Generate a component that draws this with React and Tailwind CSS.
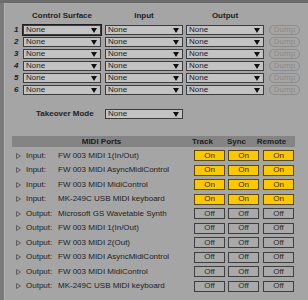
const ports = [
  { dir: "Input:", name: "FW 003 MIDI 1(In/Out)", on: true },
  { dir: "Input:", name: "FW 003 MIDI AsyncMidiControl", on: true },
  { dir: "Input:", name: "FW 003 MIDI MidiControl", on: true },
  { dir: "Input:", name: "MK-249C USB MIDI keyboard", on: true },
  { dir: "Output:", name: "Microsoft GS Wavetable Synth", on: false },
  { dir: "Output:", name: "FW 003 MIDI 1(In/Out)", on: false },
  { dir: "Output:", name: "FW 003 MIDI 2(Out)", on: false },
  { dir: "Output:", name: "FW 003 MIDI AsyncMidiControl", on: false },
  { dir: "Output:", name: "FW 003 MIDI MidiControl", on: false },
  { dir: "Output:", name: "MK-249C USB MIDI keyboard", on: false },
];

function Arrow() {
  return (
    <svg width="6" height="5" viewBox="0 0 6 5" className="shrink-0">
      <polygon points="0,0 6,0 3,5" fill="#111" />
    </svg>
  );
}

function Select({ active }) {
  return (
    <div
      className={`flex h-[10px] w-[78px] items-center justify-between border border-[#3c3c3c] bg-[#c3c3c3] pl-[2px] pr-[3px] ${
        active ? "outline outline-1 outline-[#1e1e1e]" : ""
      }`}
    >
      <span className="text-[8px] leading-none text-[#222]">None</span>
      <Arrow />
    </div>
  );
}

function Toggle({ on }) {
  return (
    <div
      className={`flex h-[11px] w-[31px] items-center justify-center border text-[8px] leading-none ${
        on
          ? "border-[#5a4a10] bg-[#ffc700] text-[#2a2a2a]"
          : "border-[#3e3e3e] bg-[#a9a9a9] text-[#2a2a2a]"
      }`}
    >
      {on ? "On" : "Off"}
    </div>
  );
}

export default function App() {
  return (
    <div className="flex h-[300px] w-[308px] flex-col overflow-hidden bg-[#a5a5a5] font-['Liberation_Sans',Arial,sans-serif]">
      <div className="h-[3px] shrink-0 bg-[#6c6c6c]" />
      <div className="flex flex-1">
        <div className="w-[5px] shrink-0 border-r border-[#b4b4b4] bg-[#7a7a7a]" />
        <div className="flex flex-1 flex-col pt-[9px]">
          {/* control surface table */}
          <div className="flex h-[8px] items-center text-[8px] font-bold leading-none text-[#1e1e1e]">
            <div className="w-[18px]" />
            <div className="w-[78px] text-center">Control Surface</div>
            <div className="ml-[4px] w-[78px] text-center">Input</div>
            <div className="ml-[3px] w-[78px] text-center">Output</div>
          </div>
          <div className="mt-[5px] flex flex-col gap-[2px]">
            {[1, 2, 3, 4, 5, 6].map((n) => (
              <div key={n} className="flex h-[10px] items-center">
                <div className="w-[18px] pl-[9px] text-[8px] font-bold italic leading-none text-[#1e1e1e]">{n}</div>
                <Select active={n === 1} />
                <div className="ml-[4px]">
                  <Select />
                </div>
                <div className="ml-[3px]">
                  <Select />
                </div>
                <div className="ml-[5px] flex h-[10px] w-[31px] items-center justify-center rounded-full border border-[#8c8c8c] text-[8px] leading-none text-[#8a8a8a]">
                  Dump
                </div>
              </div>
            ))}
          </div>

          {/* takeover */}
          <div className="mt-[14px] flex h-[10px] items-center">
            <div className="w-[100px] pl-[31px] text-[8px] font-bold leading-none text-[#1e1e1e]">Takeover Mode</div>
            <Select />
          </div>

          {/* midi ports */}
          <div className="ml-[7px] mt-[17px] flex h-[11px] w-[283px] items-center bg-[#848484] text-[8px] font-bold leading-none text-[#1e1e1e]">
            <div className="w-[175px] pl-[4px] text-center">MIDI Ports</div>
            <div className="w-[31px] text-center">Track</div>
            <div className="ml-[3px] w-[31px] text-center">Sync</div>
            <div className="ml-[4px] w-[31px] text-center">Remote</div>
          </div>
          <div className="mt-[3px] flex flex-col">
            {ports.map((p, i) => (
              <div key={i} className="flex h-[14.5px] items-start">
                <div className="flex h-[11px] items-center">
                  <div className="flex w-[21px] justify-end pr-[5px]">
                    <svg width="5" height="6" viewBox="0 0 5 6">
                      <polygon points="0.5,0.5 4.5,3 0.5,5.5" fill="none" stroke="#5e5e5e" strokeWidth="1" />
                    </svg>
                  </div>
                  <div className="w-[32px] text-[8px] leading-none text-[#1e1e1e]">{p.dir}</div>
                  <div className="w-[136px] truncate text-[8px] leading-none text-[#1e1e1e]">{p.name}</div>
                </div>
                <Toggle on={p.on} />
                <div className="ml-[3px]">
                  <Toggle on={p.on} />
                </div>
                <div className="ml-[4px]">
                  <Toggle on={p.on} />
                </div>
              </div>
            ))}
          </div>
        </div>
      </div>
    </div>
  );
}
